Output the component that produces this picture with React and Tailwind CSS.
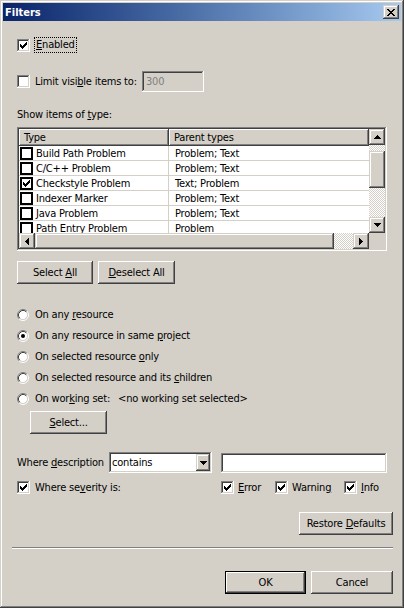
import React from "react";

const font = "font-['DejaVu_Sans_Condensed','Liberation_Sans',Arial,sans-serif]";
const raised =
  "bg-[#d4d0c8] shadow-[inset_-1px_-1px_0_#404040,inset_1px_1px_0_#ffffff,inset_-2px_-2px_0_#808080,inset_2px_2px_0_#d4d0c8]";
const sbBtn =
  "bg-[#d4d0c8] shadow-[inset_-1px_-1px_0_#404040,inset_1px_1px_0_#d4d0c8,inset_-2px_-2px_0_#808080,inset_2px_2px_0_#ffffff]";
const sunken =
  "shadow-[inset_-1px_-1px_0_#ffffff,inset_1px_1px_0_#808080,inset_-2px_-2px_0_#d4d0c8,inset_2px_2px_0_#404040]";
const defBtn =
  "bg-[#d4d0c8] shadow-[inset_0_0_0_1px_#000000,inset_-2px_-2px_0_#404040,inset_2px_2px_0_#ffffff,inset_-3px_-3px_0_#808080,inset_3px_3px_0_#d4d0c8]";
const checker =
  "bg-[repeating-conic-gradient(#d4d0c8_0%_25%,#ffffff_0%_50%)] bg-[length:2px_2px]";
const header =
  "bg-[#d4d0c8] shadow-[inset_-1px_-1px_0_#404040,inset_1px_1px_0_#ffffff,inset_-2px_-2px_0_#808080]";

function CheckMark() {
  return (
    <svg width="7" height="7" viewBox="0 0 7 7" shapeRendering="crispEdges">
      <path
        d="M0 2h1v3H0z M1 3h1v3H1z M2 4h1v3H2z M3 3h1v3H3z M4 2h1v3H4z M5 1h1v3H5z M6 0h1v3H6z"
        fill="#000"
      />
    </svg>
  );
}

function CheckBox({ checked }) {
  return (
    <span className={`w-[13px] h-[13px] shrink-0 bg-white flex items-center justify-center ${sunken}`}>
      {checked && <CheckMark />}
    </span>
  );
}

function FlatCheck({ checked }) {
  return (
    <span className="w-[13px] h-[13px] shrink-0 bg-white border-2 border-black flex items-center justify-center">
      {checked && <CheckMark />}
    </span>
  );
}

function Radio({ selected }) {
  return (
    <svg width="12" height="12" viewBox="0 0 12 12" className="shrink-0">
      <circle cx="6" cy="6" r="4.5" fill="#fff" />
      <path d="M2.11 9.89 A5.5 5.5 0 0 1 9.89 2.11" fill="none" stroke="#808080" strokeWidth="1" />
      <path d="M9.89 2.11 A5.5 5.5 0 0 1 2.11 9.89" fill="none" stroke="#ffffff" strokeWidth="1" />
      <path d="M2.82 9.18 A4.5 4.5 0 0 1 9.18 2.82" fill="none" stroke="#404040" strokeWidth="1" />
      <path d="M9.18 2.82 A4.5 4.5 0 0 1 2.82 9.18" fill="none" stroke="#d4d0c8" strokeWidth="1" />
      {selected && <circle cx="6" cy="6" r="2" fill="#000" />}
    </svg>
  );
}

function Arrow({ dir }) {
  const paths = {
    up: "M3 0h1v1H3z M2 1h3v1H2z M1 2h5v1H1z M0 3h7v1H0z",
    down: "M0 0h7v1H0z M1 1h5v1H1z M2 2h3v1H2z M3 3h1v1H3z",
  };
  const side = {
    left: "M3 0h1v7H3z M2 1h1v5H2z M1 2h1v3H1z M0 3h1v1H0z",
    right: "M0 0h1v7H0z M1 1h1v5H1z M2 2h1v3H2z M3 3h1v1H3z",
  };
  if (dir === "up" || dir === "down")
    return (
      <svg width="7" height="4" viewBox="0 0 7 4" shapeRendering="crispEdges">
        <path d={paths[dir]} fill="#000" />
      </svg>
    );
  return (
    <svg width="4" height="7" viewBox="0 0 4 7" shapeRendering="crispEdges">
      <path d={side[dir]} fill="#000" />
    </svg>
  );
}

function CloseGlyph() {
  return (
    <svg width="8" height="7" viewBox="0 0 8 7" shapeRendering="crispEdges">
      <path
        d="M0 0h2v1H0z M6 0h2v1H6z M1 1h2v1H1z M5 1h2v1H5z M2 2h4v1H2z M3 3h2v1H3z M2 4h4v1H2z M1 5h2v1H1z M5 5h2v1H5z M0 6h2v1H0z M6 6h2v1H6z"
        fill="#000"
      />
    </svg>
  );
}

function Btn({ children, className = "", def = false }) {
  return (
    <div className={`h-[23px] flex items-center justify-center ${def ? defBtn : raised} ${className}`}>
      <span>{children}</span>
    </div>
  );
}

const rows = [
  ["Build Path Problem", "Problem; Text", false],
  ["C/C++ Problem", "Problem; Text", false],
  ["Checkstyle Problem", "Text; Problem", true],
  ["Indexer Marker", "Problem; Text", false],
  ["Java Problem", "Problem; Text", false],
  ["Path Entry Problem", "Problem", false],
];

export default function App() {
  return (
    <div
      className={`${font} text-[11px] leading-[13px] tracking-[-0.2px] text-black w-[404px] h-[608px] bg-[#d4d0c8] p-[3px] flex flex-col shadow-[inset_-1px_-1px_0_#404040,inset_1px_1px_0_#d4d0c8,inset_-2px_-2px_0_#808080,inset_2px_2px_0_#ffffff]`}
    >
      {/* Title bar */}
      <div className="h-[18px] shrink-0 flex items-center bg-linear-to-r from-[#0a246a] to-[#a6caf0] pl-[2px] pr-[2px]">
        <span className="text-white font-bold tracking-normal">Filters</span>
        <div className={`ml-auto w-[16px] h-[14px] flex items-center justify-center ${sbBtn}`}>
          <CloseGlyph />
        </div>
      </div>

      <div className="flex flex-col pl-[14px] pr-[8px]">
        {/* Enabled */}
        <div className="mt-[16px] h-[16px] flex items-center">
          <CheckBox checked />
          <span className="ml-[4px] h-[16px] px-[1px] border border-dotted border-black leading-[14px]">
            <u>E</u>nabled
          </span>
        </div>

        {/* Limit */}
        <div className="mt-[18px] h-[21px] flex items-center">
          <CheckBox />
          <span className="ml-[5px] w-[107px] whitespace-nowrap">
            Limit visi<u>b</u>le items to:
          </span>
          <div className={`w-[62px] h-[21px] flex items-center pl-[4px] text-[#808080] ${sunken}`}>300</div>
        </div>

        <div className="mt-[16px] h-[13px]">
          Show items of <u>t</u>ype:
        </div>

        {/* Table */}
        <div className={`mt-[6px] w-[370px] h-[124px] p-[2px] bg-white ${sunken}`}>
          <div className="flex h-[104px]">
            <div className="w-[350px] flex flex-col">
              <div className="h-[17px] flex shrink-0">
                <div className={`w-[150px] pl-[5px] flex items-center ${header}`}>Type</div>
                <div className={`w-[200px] pl-[5px] flex items-center ${header}`}>Parent types</div>
              </div>
              <div className="h-[87px] overflow-hidden">
                {rows.map(([name, parent, checked]) => (
                  <div key={name} className="h-[15px] flex border-b border-[#d4d0c8]">
                    <div className="w-[150px] border-r border-[#d4d0c8] flex items-center pl-[1px]">
                      <FlatCheck checked={checked} />
                      <span className="ml-[3px] whitespace-nowrap">{name}</span>
                    </div>
                    <div className="w-[200px] flex items-center pl-[6px] whitespace-nowrap">{parent}</div>
                  </div>
                ))}
              </div>
            </div>
            <div className="w-[16px] flex flex-col">
              <div className={`h-[16px] flex items-center justify-center ${sbBtn}`}>
                <Arrow dir="up" />
              </div>
              <div className={`h-[6px] ${checker}`} />
              <div className={`h-[37px] ${sbBtn}`} />
              <div className={`flex-1 ${checker}`} />
              <div className={`h-[16px] flex items-center justify-center ${sbBtn}`}>
                <Arrow dir="down" />
              </div>
            </div>
          </div>
          <div className="flex h-[16px]">
            <div className={`w-[16px] flex items-center justify-center ${sbBtn}`}>
              <Arrow dir="left" />
            </div>
            <div className={`w-[299px] ${sbBtn}`} />
            <div className={`flex-1 ${checker}`} />
            <div className={`w-[16px] flex items-center justify-center ${sbBtn}`}>
              <Arrow dir="right" />
            </div>
            <div className="w-[16px] bg-[#d4d0c8]" />
          </div>
        </div>

        {/* Select / Deselect */}
        <div className="mt-[10px] flex gap-[5px]">
          <Btn className="w-[76px]">
            Select <u>A</u>ll
          </Btn>
          <Btn className="w-[77px]">
            <u>D</u>eselect All
          </Btn>
        </div>

        {/* Radios */}
        <div className="mt-[20px] flex flex-col">
          <div className="h-[21px] flex items-center">
            <Radio />
            <span className="ml-[6px]">
              On any <u>r</u>esource
            </span>
          </div>
          <div className="h-[21px] flex items-center">
            <Radio selected />
            <span className="ml-[6px]">
              On any resource in same <u>p</u>roject
            </span>
          </div>
          <div className="h-[21px] flex items-center">
            <Radio />
            <span className="ml-[6px]">
              On selected resource <u>o</u>nly
            </span>
          </div>
          <div className="h-[21px] flex items-center">
            <Radio />
            <span className="ml-[6px]">
              On selected resource and its <u>c</u>hildren
            </span>
          </div>
          <div className="h-[21px] flex items-center">
            <Radio />
            <span className="ml-[6px]">
              On wor<u>k</u>ing set:
            </span>
            <span className="ml-[8px]">&lt;no working set selected&gt;</span>
          </div>
        </div>

        <Btn className="mt-[2px] ml-[13px] w-[77px]">
          <u>S</u>elect...
        </Btn>

        {/* Where description */}
        <div className="mt-[18px] h-[21px] flex items-center">
          <span className="w-[92px] whitespace-nowrap">
            Where <u>d</u>escription
          </span>
          <div className={`w-[103px] h-[21px] bg-white p-[2px] flex ${sunken}`}>
            <span className="flex-1 pl-[1px] leading-[17px]">contains</span>
            <div className={`w-[14px] h-[17px] flex items-center justify-center ${sbBtn}`}>
              <Arrow dir="down" />
            </div>
          </div>
          <div className={`ml-[9px] w-[166px] h-[20px] bg-white ${sunken}`} />
        </div>

        {/* Severity */}
        <div className="mt-[8px] h-[13px] flex items-center">
          <CheckBox checked />
          <span className="ml-[5px] w-[186px]">
            Where se<u>v</u>erity is:
          </span>
          <div className="w-[54px] flex items-center">
            <CheckBox checked />
            <span className="ml-[4px]">
              <u>E</u>rror
            </span>
          </div>
          <div className="w-[69px] flex items-center">
            <CheckBox checked />
            <span className="ml-[4px]">
              Warnin<u>g</u>
            </span>
          </div>
          <div className="flex items-center">
            <CheckBox checked />
            <span className="ml-[4px]">
              <u>I</u>nfo
            </span>
          </div>
        </div>

        <Btn className="mt-[18px] self-end w-[94px]">
          Restore <u>D</u>efaults
        </Btn>

        <div className="mt-[12px] -ml-[5px] h-[2px] border-t border-t-[#808080] border-b border-b-white" />

        <div className="mt-[22px] flex justify-end gap-[5px]">
          <Btn def className="w-[81px]">
            OK
          </Btn>
          <Btn className="w-[82px]">Cancel</Btn>
        </div>
      </div>
    </div>
  );
}
